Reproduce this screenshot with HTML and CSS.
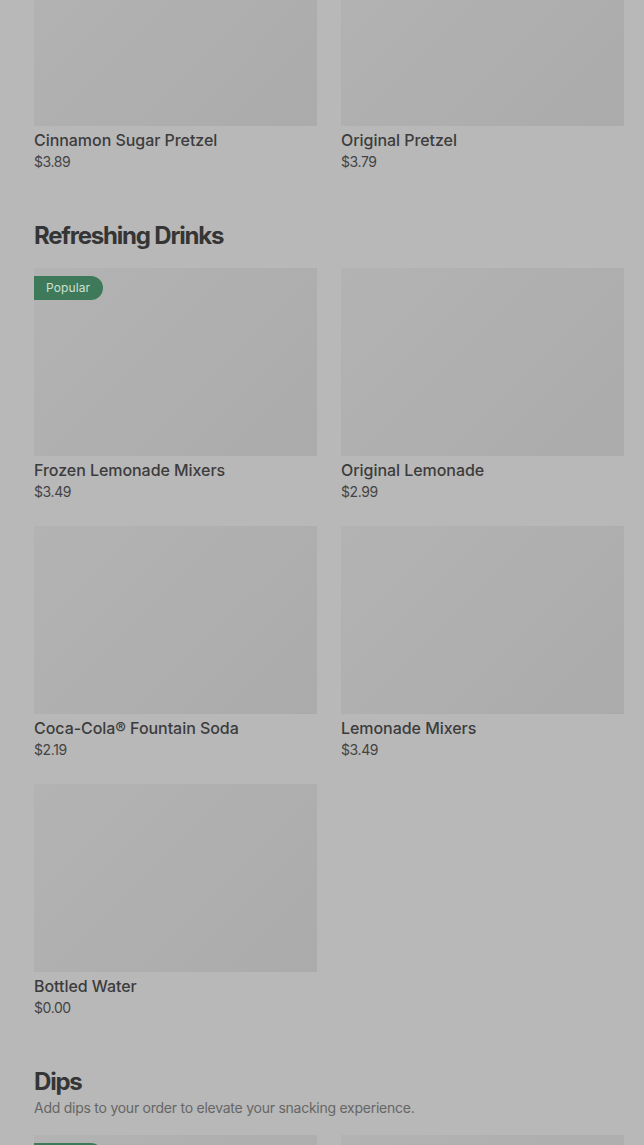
FILE: index.html
```html
<!DOCTYPE html>
<html lang="en">
<head>
<meta charset="utf-8">
<title>Menu</title>
<link rel="stylesheet" href="styles.css">
</head>
<body>
<main class="menu">
  <section class="section section-first">
    <div class="grid">
      <article class="card">
        <div class="thumb"></div>
        <h3 class="card-title">Cinnamon Sugar Pretzel</h3>
        <p class="card-price">$3.89</p>
      </article>
      <article class="card">
        <div class="thumb"></div>
        <h3 class="card-title">Original Pretzel</h3>
        <p class="card-price">$3.79</p>
      </article>
    </div>
  </section>

  <section class="section">
    <h2 class="section-title">Refreshing Drinks</h2>
    <div class="grid">
      <article class="card">
        <div class="thumb"><span class="badge">Popular</span></div>
        <h3 class="card-title">Frozen Lemonade Mixers</h3>
        <p class="card-price">$3.49</p>
      </article>
      <article class="card">
        <div class="thumb"></div>
        <h3 class="card-title">Original Lemonade</h3>
        <p class="card-price">$2.99</p>
      </article>
      <article class="card">
        <div class="thumb"></div>
        <h3 class="card-title">Coca-Cola® Fountain Soda</h3>
        <p class="card-price">$2.19</p>
      </article>
      <article class="card">
        <div class="thumb"></div>
        <h3 class="card-title">Lemonade Mixers</h3>
        <p class="card-price">$3.49</p>
      </article>
      <article class="card">
        <div class="thumb"></div>
        <h3 class="card-title">Bottled Water</h3>
        <p class="card-price">$0.00</p>
      </article>
    </div>
  </section>

  <section class="section">
    <h2 class="section-title">Dips</h2>
    <p class="section-desc">Add dips to your order to elevate your snacking experience.</p>
    <div class="grid grid-dips">
      <article class="card">
        <div class="thumb"><span class="badge">Popular</span></div>
        <h3 class="card-title">Cheese Dip</h3>
        <p class="card-price">$0.99</p>
      </article>
      <article class="card">
        <div class="thumb"></div>
        <h3 class="card-title">Sweet Mustard Dip</h3>
        <p class="card-price">$0.99</p>
      </article>
    </div>
  </section>
</main>
</body>
</html>
```

FILE: styles.css
```css
* { box-sizing: border-box; }

html, body {
  margin: 0;
  padding: 0;
  height: 100%;
  overflow: hidden;
  background: #b8b8b8;
}

body {
  font-family: Inter, "Liberation Sans", Arial, sans-serif;
  color: #3a3a3a;
}

.menu {
  padding: 0 20px 0 34px;
  margin-top: -62px;
}

.section {
  margin-top: 50px;
}

.section-first {
  margin-top: 0;
}

.section-title {
  margin: 0;
  font-size: 24px;
  line-height: 28px;
  font-weight: 700;
  letter-spacing: -1.2px;
  color: #353535;
}

.section-desc {
  margin: 2px 0 0;
  font-size: 14px;
  line-height: 20px;
  letter-spacing: -0.25px;
  color: #666666;
}

.grid {
  display: grid;
  grid-template-columns: 283px 283px;
  column-gap: 24px;
  row-gap: 24px;
  margin-top: 18px;
}

.section-first .grid {
  margin-top: 0;
}

.grid-dips {
  margin-top: 17px;
}

.card {
  display: flex;
  flex-direction: column;
}

.thumb {
  position: relative;
  height: 188px;
  background: linear-gradient(135deg, #b3b3b3 0%, #afafaf 50%, #ababab 100%);
}

.badge {
  position: absolute;
  top: 8px;
  left: 0;
  height: 24px;
  padding: 0 13px 0 12px;
  border-radius: 0 12px 12px 0;
  background: #3e7a59;
  color: #cfe0d5;
  font-size: 12px;
  line-height: 24px;
  letter-spacing: 0.1px;
}

.card-title {
  margin: 4px 0 0;
  font-size: 16px;
  line-height: 20px;
  font-weight: 500;
  letter-spacing: -0.05px;
  color: #3c3c3c;
}

.card-price {
  margin: 2px 0 0;
  font-size: 14px;
  line-height: 20px;
  font-weight: 400;
  letter-spacing: -0.4px;
  color: #444444;
}
```
